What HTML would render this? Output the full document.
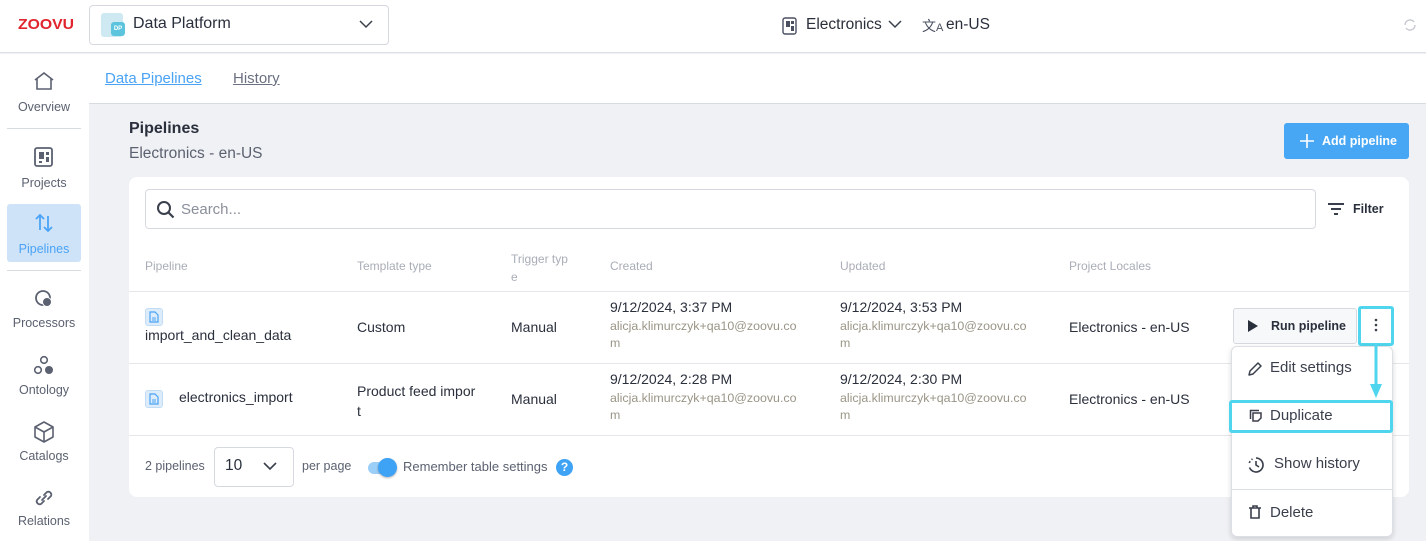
<!DOCTYPE html>
<html><head><meta charset="utf-8"><style>
*{box-sizing:border-box;margin:0;padding:0}
body{width:1426px;height:541px;overflow:hidden;background:#f0f1f5;font-family:"Liberation Sans",sans-serif;color:#2a2f3c;position:relative}
.a{position:absolute;white-space:nowrap}
.hdr{left:0;top:0;width:1426px;height:53px;background:#fff;border-bottom:1px solid #dcdfe6}
.side{left:0;top:54px;width:89px;height:487px;background:#fff}
.nav{position:absolute;left:7px;width:74px;text-align:center;font-size:12.5px;color:#5b6170}
.tabs{left:89px;top:54px;width:1337px;height:50px;background:#fff;border-bottom:1px solid #d8dbe2}
.card{left:129px;top:177px;width:1280px;height:320px;background:#fff;border-radius:8px}
.th{font-size:12px;color:#a9adb7}
.td{font-size:14px;color:#2a2f3c}
.em{font-size:12.4px;color:#9a9586;line-height:17px}
.hr{height:1px;background:#e4e6ea}
.menu{left:1231px;top:346px;width:162px;height:191px;background:#fff;border:1px solid #dcdfe6;border-radius:6px;box-shadow:0 2px 6px rgba(0,0,0,.15)}
</style></head><body>
<div class="a hdr"></div>
<div class="a" style="left:18px;top:16px;font-weight:bold;font-size:15px;color:#e0252f;letter-spacing:0px;transform:scaleX(1.05);transform-origin:left">ZOOVU</div>
<div class="a" style="left:89px;top:5px;width:300px;height:40px;border:1px solid #d6d9e0;border-radius:4px"></div>
<div class="a" style="left:101px;top:13px;width:22px;height:24px;background:#cfe9f3;border-radius:3px"></div>
<div class="a" style="left:111px;top:22px;width:14px;height:14px;background:#5cc5dd;border-radius:3px;color:#fff;font-size:6px;text-align:center;line-height:14px;font-weight:bold">DP</div>
<div class="a" style="left:133px;top:15px;font-size:16px">Data Platform</div>
<svg class="a" style="left:359px;top:19px" width="14" height="10"><path d="M1 2l6 6 6-6" stroke="#3a3f4c" stroke-width="1.5" fill="none"/></svg>
<svg class="a" style="left:782px;top:17px" width="16" height="18"><rect x="1" y="1" width="13" height="16" rx="2" fill="none" stroke="#4a5060" stroke-width="1.4"/><rect x="4" y="4" width="4" height="6" fill="#4a5060"/><rect x="9" y="4" width="3" height="3" fill="#4a5060"/><rect x="9" y="9" width="3" height="5" fill="#4a5060"/></svg>
<div class="a" style="left:806px;top:16px;font-size:15.5px">Electronics</div>
<svg class="a" style="left:888px;top:19px" width="14" height="10"><path d="M1 2l6 6 6-6" stroke="#3a3f4c" stroke-width="1.5" fill="none"/></svg>
<div class="a" style="left:922px;top:16px;font-size:14px;color:#4a5060">文<span style="font-size:11px">A</span></div>
<div class="a" style="left:946px;top:16px;font-size:15.5px">en-US</div>
<svg class="a" style="left:1403px;top:18px" width="14" height="14"><path d="M2 7a5 5 0 0 1 9-3M12 7a5 5 0 0 1-9 3" stroke="#c5c8cf" stroke-width="1.4" fill="none"/></svg>

<div class="a side"></div>
<div class="nav" style="top:70px"><svg width="24" height="22"><path d="M3 10L12 3l9 7M5 9v10h14V9" stroke="#5b6170" stroke-width="1.6" fill="none"/></svg><div style="margin-top:5px">Overview</div></div>
<div class="a" style="left:7px;top:128px;width:74px;height:1px;background:#d8dbe2"></div>
<div class="nav" style="top:146px"><svg width="22" height="22"><rect x="2" y="2" width="17" height="18" rx="2" fill="none" stroke="#5b6170" stroke-width="1.8"/><rect x="6" y="6" width="5" height="7" fill="#5b6170"/><rect x="13" y="6" width="3" height="3" fill="#5b6170"/><rect x="13" y="11" width="3" height="5" fill="#5b6170"/><rect x="6" y="15" width="3" height="2" fill="#5b6170"/></svg><div style="margin-top:5px">Projects</div></div>
<div class="a" style="left:7px;top:204px;width:74px;height:58px;background:#cfe3f8;border-radius:3px"></div>
<div class="nav" style="top:212px;color:#4aa3f5"><svg width="22" height="22"><path d="M7 18V3M3 7l4-4 4 4M15 4v15M11 15l4 4 4-4" stroke="#4aa3f5" stroke-width="1.8" fill="none"/></svg><div style="margin-top:5px">Pipelines</div></div>
<div class="a" style="left:7px;top:270px;width:74px;height:1px;background:#d8dbe2"></div>
<div class="nav" style="top:288px"><svg width="22" height="22"><circle cx="10" cy="10" r="7" fill="none" stroke="#5b6170" stroke-width="1.8"/><circle cx="14" cy="14" r="4.5" fill="#5b6170" stroke="#fff" stroke-width="1"/></svg><div style="margin-top:3px">Processors</div></div>
<div class="nav" style="top:355px"><svg width="24" height="22"><circle cx="12" cy="5" r="3.3" fill="none" stroke="#5b6170" stroke-width="1.6"/><circle cx="6" cy="15" r="3.3" fill="none" stroke="#5b6170" stroke-width="1.6"/><circle cx="17" cy="15" r="4" fill="#5b6170"/></svg><div style="margin-top:3px">Ontology</div></div>
<div class="nav" style="top:420px"><svg width="24" height="24"><path d="M12 2l9 5v10l-9 5-9-5V7zM3 7l9 5 9-5M12 12v10" stroke="#5b6170" stroke-width="1.6" fill="none" stroke-linejoin="round"/></svg><div style="margin-top:2px">Catalogs</div></div>
<div class="nav" style="top:486px"><svg width="24" height="24"><path d="M10 14l4-4M8 11l-3 3a3 3 0 0 0 4 4l3-3M16 13l3-3a3 3 0 0 0-4-4l-3 3" stroke="#5b6170" stroke-width="1.8" fill="none" stroke-linecap="round"/></svg><div style="margin-top:1px">Relations</div></div>

<div class="a tabs"></div>
<div class="a" style="left:105px;top:70px;font-size:15px;color:#4aa3f5;text-decoration:underline">Data Pipelines</div>
<div class="a" style="left:233px;top:70px;font-size:15px;color:#6b7080;text-decoration:underline">History</div>

<div class="a" style="left:129px;top:120px;font-size:16px;font-weight:bold">Pipelines</div>
<div class="a" style="left:129px;top:145px;font-size:15.5px;color:#5b6170">Electronics - en-US</div>
<div class="a" style="left:1284px;top:123px;width:125px;height:36px;background:#47a7f5;border-radius:3px;color:#fff;font-size:12.5px;font-weight:bold;line-height:36px;padding-left:38px">Add pipeline</div>
<svg class="a" style="left:1299px;top:133px" width="16" height="16"><path d="M8 1v14M1 8h14" stroke="#fff" stroke-width="1.6"/></svg>

<div class="a card"></div>
<div class="a" style="left:145px;top:189px;width:1171px;height:40px;border:1px solid #d6d9e0;border-radius:4px"></div>
<svg class="a" style="left:156px;top:200px" width="20" height="20"><circle cx="8" cy="8" r="6" fill="none" stroke="#3a3f4c" stroke-width="2"/><path d="M12.5 12.5l5 5" stroke="#3a3f4c" stroke-width="2.2"/></svg>
<div class="a" style="left:181px;top:201px;font-size:15px;color:#8a8f9a">Search...</div>
<svg class="a" style="left:1327px;top:202px" width="18" height="14"><path d="M1 2h16M4 7h10M7 12h4" stroke="#3a3f4c" stroke-width="2"/></svg>
<div class="a" style="left:1353px;top:202px;font-size:12.5px;font-weight:bold">Filter</div>

<div class="a th" style="left:145px;top:259px">Pipeline</div>
<div class="a th" style="left:357px;top:259px">Template type</div>
<div class="a th" style="left:511px;top:250px;width:70px;line-height:18px">Trigger typ<br>e</div>
<div class="a th" style="left:610px;top:259px">Created</div>
<div class="a th" style="left:840px;top:259px">Updated</div>
<div class="a th" style="left:1069px;top:259px">Project Locales</div>
<div class="a hr" style="left:129px;top:291px;width:1280px"></div>

<div class="a" style="left:145px;top:308px;width:18px;height:18px;background:#dcecfb;border:1px solid #c2dcf5;border-radius:3px"></div>
<svg class="a" style="left:149px;top:311px" width="10" height="12"><path d="M1 1h5l3 3v7H1z" fill="none" stroke="#4aa3f5" stroke-width="1.2"/><path d="M3 7h4M3 9h4" stroke="#4aa3f5"/></svg>
<div class="a td" style="left:145px;top:327px">import_and_clean_data</div>
<div class="a td" style="left:357px;top:319px">Custom</div>
<div class="a td" style="left:511px;top:319px">Manual</div>
<div class="a td" style="left:610px;top:299px">9/12/2024, 3:37 PM</div>
<div class="a em" style="left:610px;top:318px">alicja.klimurczyk+qa10@zoovu.co<br>m</div>
<div class="a td" style="left:840px;top:299px">9/12/2024, 3:53 PM</div>
<div class="a em" style="left:840px;top:318px">alicja.klimurczyk+qa10@zoovu.co<br>m</div>
<div class="a td" style="left:1069px;top:319px">Electronics - en-US</div>
<div class="a" style="left:1233px;top:308px;width:124px;height:36px;border:1px solid #d6d9e0;border-radius:3px;background:#f7f8fa;font-size:12.5px;font-weight:bold;line-height:34px;padding-left:37px">Run pipeline</div>
<svg class="a" style="left:1248px;top:320px" width="10" height="12"><path d="M0 0l10 6-10 6z" fill="#2a2f3c"/></svg>
<div class="a" style="left:1358px;top:306px;width:36px;height:40px;border:3px solid #4fd6ee;border-radius:3px"></div>
<svg class="a" style="left:1374px;top:318px" width="4" height="14"><circle cx="2" cy="2" r="1.3" fill="#3a3f4c"/><circle cx="2" cy="7" r="1.3" fill="#3a3f4c"/><circle cx="2" cy="12" r="1.3" fill="#3a3f4c"/></svg>
<div class="a hr" style="left:129px;top:363px;width:1280px"></div>

<div class="a" style="left:145px;top:390px;width:18px;height:18px;background:#dcecfb;border:1px solid #c2dcf5;border-radius:3px"></div>
<svg class="a" style="left:149px;top:393px" width="10" height="12"><path d="M1 1h5l3 3v7H1z" fill="none" stroke="#4aa3f5" stroke-width="1.2"/><path d="M3 7h4M3 9h4" stroke="#4aa3f5"/></svg>
<div class="a td" style="left:179px;top:389px">electronics_import</div>
<div class="a td" style="left:357px;top:381px;line-height:20px">Product feed impor<br>t</div>
<div class="a td" style="left:511px;top:391px">Manual</div>
<div class="a td" style="left:610px;top:371px">9/12/2024, 2:28 PM</div>
<div class="a em" style="left:610px;top:390px">alicja.klimurczyk+qa10@zoovu.co<br>m</div>
<div class="a td" style="left:840px;top:371px">9/12/2024, 2:30 PM</div>
<div class="a em" style="left:840px;top:390px">alicja.klimurczyk+qa10@zoovu.co<br>m</div>
<div class="a td" style="left:1069px;top:391px">Electronics - en-US</div>
<div class="a" style="left:129px;top:435px;width:1280px;height:1px;background:#e4e6ea"></div>

<div class="a" style="left:145px;top:459px;font-size:12.5px;color:#5b6170">2 pipelines</div>
<div class="a" style="left:214px;top:447px;width:80px;height:40px;border:1px solid #d6d9e0;border-radius:4px"></div>
<div class="a" style="left:225px;top:457px;font-size:15.5px">10</div>
<svg class="a" style="left:263px;top:462px" width="14" height="9"><path d="M1 1l6 6 6-6" stroke="#3a3f4c" stroke-width="1.6" fill="none"/></svg>
<div class="a" style="left:302px;top:459px;font-size:12.5px;color:#5b6170">per page</div>
<div class="a" style="left:368px;top:462px;width:28px;height:12px;background:#9ccff8;border-radius:6px"></div>
<div class="a" style="left:378px;top:458px;width:19px;height:19px;background:#3ea2f5;border-radius:50%;box-shadow:0 1px 2px rgba(0,0,0,.3)"></div>
<div class="a" style="left:403px;top:459px;font-size:13px;color:#5b6170">Remember table settings</div>
<div class="a" style="left:556px;top:459px;width:17px;height:17px;background:#3ea2f5;border-radius:50%;color:#fff;font-size:12px;font-weight:bold;text-align:center;line-height:17px">?</div>

<div class="a menu"></div>
<svg class="a" style="left:1247px;top:361px" width="16" height="16"><path d="M2 14l1-4 8-8 3 3-8 8z" fill="none" stroke="#3a3f4c" stroke-width="1.5" stroke-linejoin="round"/></svg>
<div class="a" style="left:1270px;top:359px;font-size:15px;color:#3a3f4c">Edit settings</div>
<div class="a" style="left:1229px;top:400px;width:164px;height:33px;border:3px solid #4fd6ee;border-radius:3px;background:#fff"></div>
<svg class="a" style="left:1249px;top:409px" width="14" height="14"><path d="M4 12V4h8v5l-3 3z" fill="none" stroke="#3a3f4c" stroke-width="1.5"/><path d="M1.5 10V1.5H10" fill="none" stroke="#3a3f4c" stroke-width="1.5"/></svg>
<div class="a" style="left:1270px;top:407px;font-size:15px;color:#3a3f4c">Duplicate</div>
<svg class="a" style="left:1247px;top:456px" width="18" height="18"><path d="M9 2a7 7 0 1 1-6.5 9.5" fill="none" stroke="#3a3f4c" stroke-width="1.6"/><path d="M2.3 7a7 7 0 0 1 3.2-4" fill="none" stroke="#3a3f4c" stroke-width="1.6" stroke-dasharray="2 2"/><path d="M9 5v4l3 2" fill="none" stroke="#3a3f4c" stroke-width="1.6"/></svg>
<div class="a" style="left:1274px;top:455px;font-size:15px;color:#3a3f4c">Show history</div>
<div class="a" style="left:1232px;top:489px;width:160px;height:1px;background:#dcdfe6"></div>
<svg class="a" style="left:1248px;top:505px" width="14" height="15"><path d="M1 3h12M5 3V1h4v2M3 3v10h8V3" fill="none" stroke="#3a3f4c" stroke-width="1.6"/></svg>
<div class="a" style="left:1270px;top:504px;font-size:15px;color:#3a3f4c">Delete</div>
<svg class="a" style="left:1368px;top:344px" width="16" height="56"><path d="M8 0v48" stroke="#4fd6ee" stroke-width="3"/><path d="M2 40l6 14 6-14z" fill="#4fd6ee"/></svg>
</body></html>
